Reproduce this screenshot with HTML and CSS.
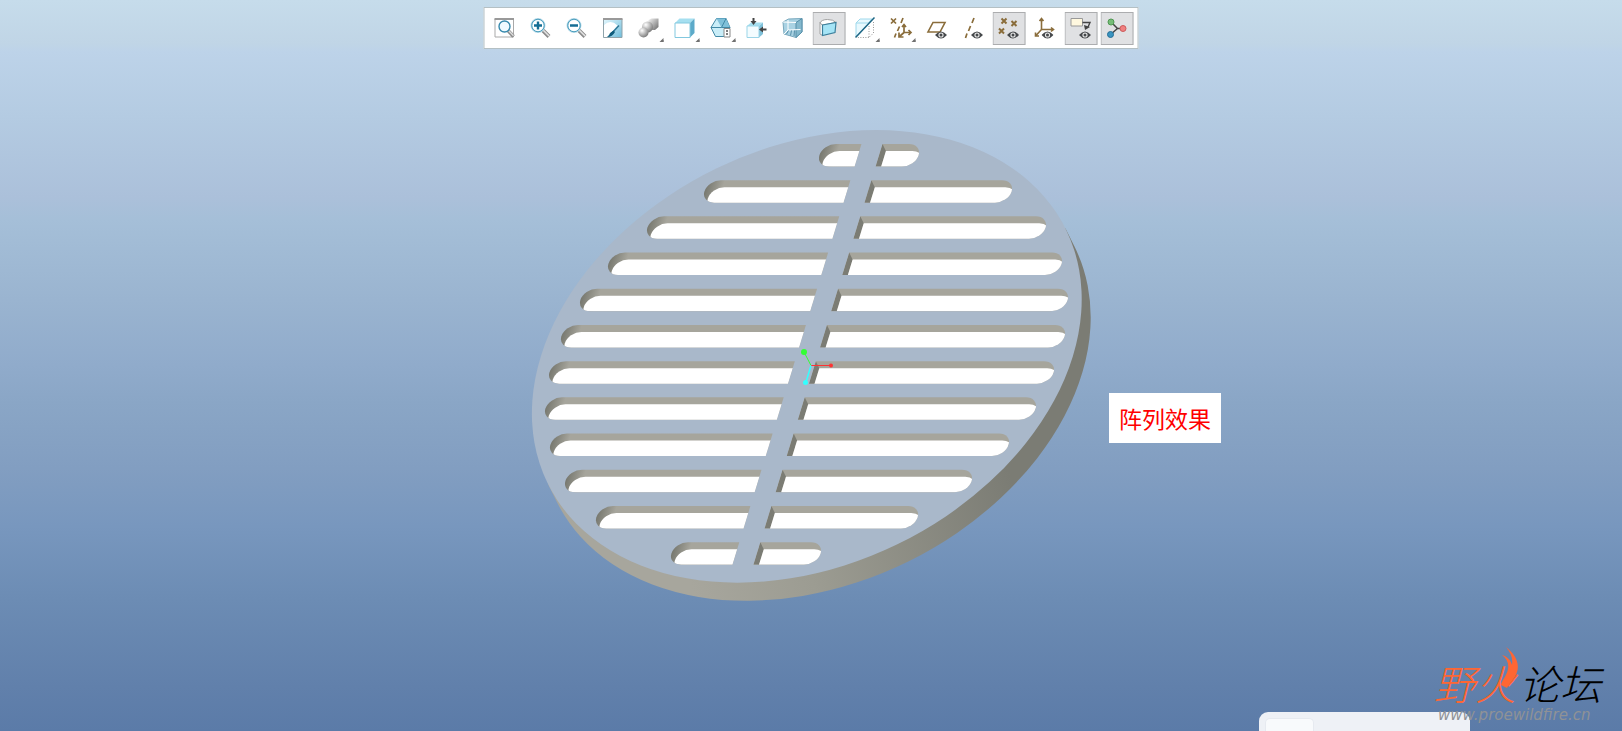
FILE: index.html
```
<!DOCTYPE html>
<html lang="zh-CN">
<head>
    <meta charset="UTF-8">
    <meta name="viewport" content="width=device-width, initial-scale=1.0">
    <title>阵列效果</title>
    <link rel="stylesheet" href="styles.css">
</head>
<body>
    <!-- shared icon parts -->
    <svg class="defs" width="0" height="0" aria-hidden="true">
        <defs>
            <linearGradient id="ice" x1="0" y1="0" x2="1" y2="1">
                <stop offset="0" stop-color="#e4f7fd"/>
                <stop offset="1" stop-color="#6fbddb"/>
            </linearGradient>
            <linearGradient id="metal" x1="0" y1="0" x2="1" y2="1">
                <stop offset="0" stop-color="#f4f4f4"/>
                <stop offset="1" stop-color="#686868"/>
            </linearGradient>
            <radialGradient id="ball" cx="0.35" cy="0.3" r="0.75">
                <stop offset="0" stop-color="#fff"/>
                <stop offset="1" stop-color="#777"/>
            </radialGradient>
            <symbol id="eye" viewBox="0 0 12 8">
                <path d="M0 4Q6-3 12 4Q6 11 0 4Z" fill="#45484b"/>
                <circle cx="6" cy="4" r="2.6" fill="#e8e8e8"/>
                <circle cx="6" cy="4" r="1.5" fill="#45484b"/>
            </symbol>
            <symbol id="lens" viewBox="0 0 33 33">
                <path d="M18.5 18.5L24.5 24.5" stroke="#8c8c8c" stroke-width="4"/>
                <path d="M18.8 18.3L24.6 24" stroke="#e4e4e4" stroke-width="1.6"/>
                <circle cx="13.5" cy="13.5" r="6.5" fill="#fff" stroke="#b9dcea" stroke-width="2"/>
                <circle cx="13.5" cy="13.5" r="6.3" fill="none" stroke="#4a9dbd"/>
            </symbol>
        </defs>
    </svg>

    <div class="toolbar">
        <button aria-label="Refit"><svg viewBox="0 0 33 33">
            <path d="M6.5 7H25V25H6.5Z" fill="#fff" stroke="#a9a9a9"/>
            <path d="M6 7H25.5" stroke="#999" stroke-width="2"/>
            <path d="M19.5 18.5L25 24.5" stroke="#8c8c8c" stroke-width="3.5"/>
            <path d="M20 18.5L25 23.8" stroke="#ddd" stroke-width="1.4"/>
            <circle cx="16" cy="14.5" r="5.5" fill="#effaff" stroke="#3689ad" stroke-width="1.4"/>
        </svg></button>
        <button aria-label="Zoom in"><svg viewBox="0 0 33 33">
            <use href="#lens"/>
            <path d="M9.5 13.5H17.5M13.5 9.5V17.5" stroke="#146d94" stroke-width="2.4"/>
        </svg></button>
        <button aria-label="Zoom out"><svg viewBox="0 0 33 33">
            <use href="#lens"/>
            <path d="M9.5 13.5H17.5" stroke="#146d94" stroke-width="2.4"/>
        </svg></button>
        <button aria-label="Repaint"><svg viewBox="0 0 33 33">
            <path d="M7 7H25.5V25.5H7Z" fill="url(#ice)" stroke="#8fa3ab"/>
            <path d="M7.5 25V13Q14 7 21 13.5L11 25Z" fill="#fff"/>
            <path d="M6.5 7H26" stroke="#999" stroke-width="2"/>
            <path d="M22.5 13.5L15 21.5" stroke="#2c7594" stroke-width="1.4"/>
            <path d="M17 18.5L18.5 20Q16 25 10.5 25Q13 23.5 13.5 21Z" fill="#0e5c7c"/>
        </svg></button>
        <button class="more" aria-label="Rendering options"><svg viewBox="0 0 33 33">
            <path d="M16 8L19 6.5H26V15L22.5 18H16Z" fill="url(#metal)"/>
            <circle cx="15" cy="15" r="5.5" fill="url(#ball)"/>
            <circle cx="11" cy="20.5" r="5" fill="url(#ball)"/>
        </svg></button>
        <button class="more" aria-label="Display style"><svg viewBox="0 0 33 33">
            <path d="M6.5 11L11 6.5H26L21.5 11Z" fill="#a5dff0"/>
            <path d="M21.5 11L26 6.5V21L21.5 25.5Z" fill="#5caac9"/>
            <path d="M6.5 11H21.5V25.5H6.5Z" fill="#fff" stroke="#82c8df"/>
        </svg></button>
        <button class="more" aria-label="Saved orientations"><svg viewBox="0 0 33 33">
            <path d="M6.5 15.5L12 6.5H21.5L25.5 15.5L21 24.5H11Z" fill="#c9edf8" stroke="#4289a6"/>
            <path d="M12 6.5H21.5L25.5 15.5H17Z" fill="#7fc0d9"/>
            <path d="M6.5 15.5H17L21.5 6.5M17 15.5H25.5" fill="none" stroke="#4289a6"/>
            <path d="M19.5 16.5H25.5V25H19.5Z" fill="#fff" stroke="#888"/>
            <path d="M21.5 19H23.5M21.5 22H23.5" stroke="#555" stroke-width="1.5"/>
        </svg></button>
        <button aria-label="View normal"><svg viewBox="0 0 33 33">
            <path d="M6.5 14L10.5 10.5H22.5L18.5 14Z" fill="#a5dff0"/>
            <path d="M18.5 14L22.5 10.5V22L18.5 25.5Z" fill="#7fc0d9"/>
            <path d="M6.5 14H18.5V25.5H6.5Z" fill="#f3fcff" stroke="#9bd5e8"/>
            <path d="M13 6V10M26 17.5H22" stroke="#444" stroke-width="2"/>
            <path d="M10 9H16L13 13ZM22.5 14.5V20.5L18.5 17.5Z" fill="#444"/>
        </svg></button>
        <button aria-label="Perspective"><svg viewBox="0 0 33 33">
            <path d="M6.5 10L12 7L25.5 6.5V20L19.5 25.5L7.5 22Z" fill="#a9d2e3" stroke="#78a8bd"/>
            <path d="M19.5 10.5L25.5 6.5V20L19.5 25.5Z" fill="#83b8cd" stroke="#568fa9"/>
            <path d="M11.5 8V18L7.5 22M11.5 18L24 17.5M6.5 10L19.5 10.5" fill="none" stroke="#fff"/>
            <path d="M12 18.5L10 22M15 18.5L14 23.5M18 18.5L17.5 24" stroke="#568fa9"/>
        </svg></button>
        <button class="active" aria-label="Section view"><svg viewBox="0 0 33 33">
            <path d="M7.5 10.5V22L10 23.5V13Z" fill="#fff" stroke="#a2a2a2"/>
            <path d="M7.5 11Q9 7.5 15 7.5Q21 7.5 23.5 10.5L10 13Z" fill="#fff" stroke="#a2a2a2"/>
            <path d="M10 13L23.5 10.5L22.5 20.5L10 23.5Z" fill="#a5e4f6" stroke="#3b7f9c" stroke-width="1.2"/>
        </svg></button>
        <button class="more" aria-label="Clipping"><svg viewBox="0 0 33 33">
            <path d="M7.5 11L11.5 7H24L9 24H7.5Z" fill="#e9f9fe" stroke="#9ed8eb"/>
            <path d="M7.5 11H20L24 7" fill="none" stroke="#9ed8eb"/>
            <path d="M25 10V21L20.5 25.5H9M20.5 14V25" fill="none" stroke="#999" stroke-dasharray="1 1.5"/>
            <path d="M26 5.5L7 25.5" stroke="#1d6584" stroke-width="1.5"/>
        </svg></button>
        <button class="more" aria-label="Datum display"><svg viewBox="0 0 33 33" fill="none" stroke="#8a6d3b" stroke-width="1.7">
            <path d="M6.5 6.5L11.5 11.5M11.5 6.5L6.5 11.5"/>
            <path d="M18.5 6L16.5 11M15 14.5L13 19M11.5 21.5L10 25.5"/>
            <path d="M19.5 13V20.5H26M19.5 20.5L15 24.5M17.5 15L19.5 12.5L21.5 15M24 18L26.5 20.5L24 23M14.5 20.5V25H19"/>
        </svg></button>
        <button aria-label="Plane display"><svg viewBox="0 0 33 33">
            <path d="M12.5 10.5H24.5L19.5 20H7.5Z" fill="none" stroke="#8a6d3b" stroke-width="1.6"/>
            <use href="#eye" x="14.5" y="19" width="12" height="8"/>
        </svg></button>
        <button aria-label="Axis display"><svg viewBox="0 0 33 33">
            <path d="M17.5 6L15.5 11M14 14L12 19M10.5 21.5L9 26" stroke="#8a6d3b" stroke-width="1.7"/>
            <use href="#eye" x="14.5" y="19" width="12" height="8"/>
        </svg></button>
        <button class="active" aria-label="Point display"><svg viewBox="0 0 33 33">
            <path d="M9 6.5L14 11.5M14 6.5L9 11.5M19 9L24 14M24 9L19 14M6.5 16.5L11.5 21.5M11.5 16.5L6.5 21.5" stroke="#8a6d3b" stroke-width="2"/>
            <use href="#eye" x="14.5" y="19" width="12" height="8"/>
        </svg></button>
        <button aria-label="Csys display"><svg viewBox="0 0 33 33">
            <path d="M13 6.5V17.5H25M13 17.5L7 24M11 9L13 6.5L15 9M22.5 15.5L25 17.5L22.5 19.5M7 20.5V24H10.5" fill="none" stroke="#8a6d3b" stroke-width="1.6"/>
            <use href="#eye" x="13" y="19" width="12" height="8"/>
        </svg></button>
        <button class="active" aria-label="Annotation display"><svg viewBox="0 0 33 33">
            <path d="M6.5 6.5H18V14H6.5Z" fill="#fff8df" stroke="#999"/>
            <path d="M18 10.5H25.5L23.5 15" fill="none" stroke="#444" stroke-width="1.4"/>
            <path d="M19.5 13L25.5 15L20.5 18Z" fill="#444"/>
            <use href="#eye" x="14.5" y="19" width="12" height="8"/>
        </svg></button>
        <button class="active" aria-label="Spin center"><svg viewBox="0 0 33 33">
            <path d="M10.5 10L17 16.5H22.5M17 16.5L10 22.5" fill="none" stroke="#444" stroke-width="1.5"/>
            <circle cx="10.5" cy="10" r="3" fill="#76bd78" stroke="#4f9852"/>
            <circle cx="22.5" cy="16.5" r="3" fill="#f08080" stroke="#cc5b5b"/>
            <circle cx="10" cy="22.5" r="3" fill="#3a94c0" stroke="#246f97"/>
        </svg></button>
    </div>

    <main class="stage">
        <svg class="plate" viewBox="531 130 560 471" role="img" aria-label="阵列效果">
            <defs>
                <linearGradient id="rim" gradientUnits="userSpaceOnUse" x1="-60" y1="240" x2="220" y2="100">
                    <stop offset="0" stop-color="#a7a69d"/>
                    <stop offset="0.35" stop-color="#9c9c92"/>
                    <stop offset="1" stop-color="#7b7c74"/>
                </linearGradient>
            </defs>
            <!-- drawn as a flat circle, tilted by the matrix -->
            <g transform="matrix(1 0 -0.261 0.8507 806.8 356.4)">
                <path d="M219.5-150.3L234-129.1A266 266 0 0 1-205 171.5L-219.5 150.3Z" fill="url(#rim)"/>
                <circle r="266" fill="#a9b8ca"/>
                <g id="slots"></g>
            </g>
            <g fill="none">
                <path d="M811 365.5L804 352" stroke="#3f3"/>
                <path d="M811 365.5H830" stroke="#f33"/>
                <path d="M811 365.5L806 382" stroke="#3ff" stroke-width="1.5"/>
            </g>
            <circle cx="804" cy="352" r="3" fill="#3f3"/>
            <circle cx="831" cy="365.5" r="2" fill="#f33"/>
            <circle cx="805.5" cy="382.5" r="2.5" fill="#3ff"/>
        </svg>
        <div class="note">阵列效果</div>
    </main>

    <div class="panel"><div class="tile"></div></div>

    <div class="watermark">
        <div class="name"><span class="fire">野火</span><span>论坛</span></div>
        <div class="site">www.proewildfire.cn</div>
        <svg class="flame" viewBox="0 0 18 44">
            <path d="M5 1C14 8 19 17 16 26C14 33 8 37 6 42L0 39C1 34 6 29 7 23C8 17 6 13 1 9C7 11 10 15 11 19C12 12 10 7 5 1Z" fill="#ff6633"/>
        </svg>
    </div>

    <script>
        // left and right end of each row of slots, top to bottom
        const rows = [
            [819, 919], [704, 1012], [647, 1046], [608, 1062],
            [580, 1068], [561, 1065], [549, 1054], [545, 1036],
            [550, 1009], [565, 972], [596, 918], [671, 821]
        ];
        const r = 13.2;      // slot radius
        const bar = 10.5;    // half width of the middle bar
        const dx = 5.6;      // wall depth
        const dy = 8.2;
        let out = '';

        rows.forEach(([left, right], i) => {
            const v = (155.2 + 36.2 * i - 356.4) / 0.8507;
            const l = left - 806.8 + 0.261 * v + 13.6;
            const e = right - 806.8 + 0.261 * v - 13.6;
            const a = `M${-bar} ${v - r}H${l}A${r} ${r} 0 0 0 ${l} ${v + r}H${-bar}Z`;
            const b = `M${bar} ${v - r}H${e}A${r} ${r} 0 0 1 ${e} ${v + r}H${bar}Z`;
            out += `
                <linearGradient id="l${i}" gradientUnits="userSpaceOnUse" x1="${l - r}" x2="${l + 4}" y1="0" y2="0">
                    <stop offset="0" stop-color="#77786f"/><stop offset="1" stop-color="#a6a59c"/>
                </linearGradient>
                <clipPath id="a${i}"><path d="${a}"/></clipPath>
                <clipPath id="b${i}"><path d="${b}"/></clipPath>
                <path d="${a}" fill="url(#l${i})"/>
                <path d="${b}" fill="#a6a59c"/>
                <g clip-path="url(#a${i})">
                    <path d="M${bar} ${v - r + dy}H${l + dx}A${r} ${r} 0 0 0 ${l + dx} ${v + r + dy}H${bar}Z" fill="#fff"/>
                </g>
                <g clip-path="url(#b${i})">
                    <path d="M${bar} ${v - r}l${dx} ${dy}V${v + r}H${bar}Z" fill="#7b7c74"/>
                    <path d="M${bar + dx} ${v - r + dy}H${e + dx}A${r} ${r} 0 0 1 ${e + dx} ${v + r + dy}H${bar + dx}Z" fill="#fff"/>
                </g>`;
        });
        document.getElementById('slots').innerHTML = out;
    </script>
</body>
</html>
```
FILE: styles.css
```
* {
    box-sizing: border-box;
}
body {
    margin: 0;
    min-height: 100vh;
    position: relative;
    overflow: hidden;
    display: flex;
    flex-direction: column;
    background: linear-gradient(#c6dceb 0%, #c0d5e6 6%, #bdd3e9 7%, #b4cbe2 16%, #abc0da 27%, #a5bfd8 30%, #9ab4d0 41%, #90abcb 50%, #8aa6c6 55%, #829ec1 64%, #7897be 72%, #6c8cb4 82%, #6180ab 94%, #5b7ba8 100%);
    font-family: "Noto Sans CJK SC", sans-serif;
}
.defs {
    position: absolute;
}
.toolbar {
    position: absolute;
    top: 7px;
    left: 50%;
    transform: translateX(-50%);
    z-index: 1;
    display: flex;
    gap: 3px;
    padding: 4px 4px 3px;
    background: #fff;
    border: 1px solid #b4c0c4;
}
.toolbar button {
    position: relative;
    width: 33px;
    height: 33px;
    padding: 0;
    border: 0;
    background: none;
}
.toolbar svg {
    display: block;
}
.toolbar .active {
    background: #e0e1e3;
    box-shadow: inset 0 0 0 1px #acadaf;
}
.toolbar .more::after {
    content: '';
    position: absolute;
    right: 2px;
    bottom: 3px;
    border: 2px solid #707070;
    border-top-color: transparent;
    border-left-color: transparent;
}
.stage {
    flex: 1;
    position: relative;
    display: flex;
    align-items: center;
    justify-content: center;
}
.plate {
    display: block;
    width: 560px;
    max-width: 100%;
}
.note {
    position: absolute;
    left: calc(50% + 298px);
    top: calc(50% + 27px);
    padding: 8px 10px;
    background: #fff;
    color: #ff0000;
    font-size: 23px;
    font-weight: 400;
    line-height: 34px;
}
.panel {
    position: absolute;
    right: 152px;
    bottom: 0;
    width: 211px;
    padding: 6px 6px 0;
    background: #eef1f6;
    border-radius: 9px 9px 0 0;
}
.tile {
    width: 49px;
    height: 13px;
    background: #f8fafc;
    border: 1px solid #e6eaf0;
    border-bottom: 0;
    border-radius: 5px 5px 0 0;
}
.watermark {
    position: absolute;
    right: 18px;
    bottom: 8px;
    width: 170px;
}
.name {
    display: flex;
    gap: 3px;
    margin-bottom: 3px;
    color: #000;
    font-size: 41px;
    font-style: italic;
    font-weight: 300;
    line-height: 44px;
}
.fire {
    color: #ff6633;
}
.site {
    color: #8f9296;
    font-family: "DejaVu Sans", sans-serif;
    font-size: 15px;
    font-style: italic;
    line-height: 16px;
    padding-left: 4px;
}
.flame {
    position: absolute;
    left: 67px;
    top: -14px;
    width: 18px;
    height: 44px;
}
```
